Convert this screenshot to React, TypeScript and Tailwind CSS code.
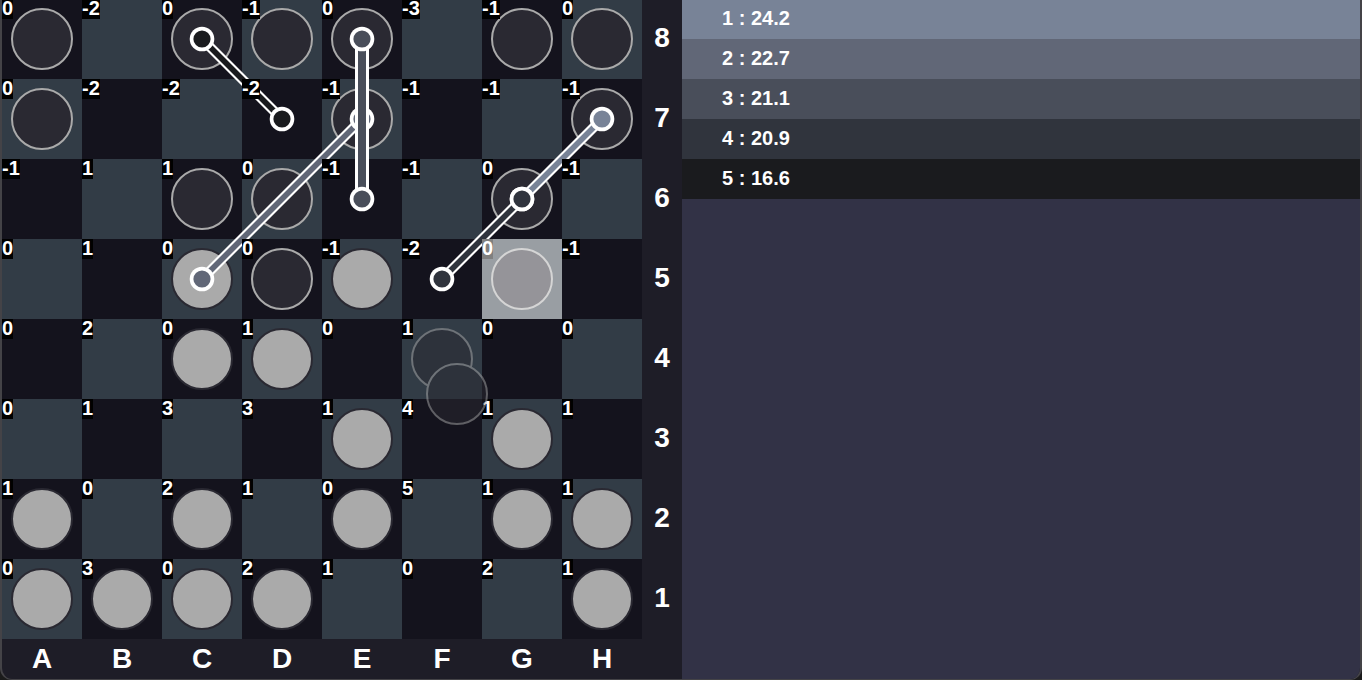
type Side = "b" | "w" | ".";

const FILES = ["A", "B", "C", "D", "E", "F", "G", "H"];

const PIECES = [
  "b.bbb.bb",
  "b...b..b",
  "..bb..b.",
  "..wbw.b.",
  "..ww....",
  "....w.w.",
  "w.w.w.ww",
  "wwww...w",
];

const CONTROL = [
  [0, -2, 0, -1, 0, -3, -1, 0],
  [0, -2, -2, -2, -1, -1, -1, -1],
  [-1, 1, 1, 0, -1, -1, 0, -1],
  [0, 1, 0, 0, -1, -2, 0, -1],
  [0, 2, 0, 1, 0, 1, 0, 0],
  [0, 1, 3, 3, 1, 4, 1, 1],
  [1, 0, 2, 1, 0, 5, 1, 1],
  [0, 3, 0, 2, 1, 0, 2, 1],
];

const MOVES = [
  { from: "H7", to: "G6", score: "24.2", row: "bg-[#788397]", fill: "fill-[#788397]" },
  { from: "E7", to: "C5", score: "22.7", row: "bg-[#616777]", fill: "fill-[#616777]" },
  { from: "E8", to: "E6", score: "21.1", row: "bg-[#494e5a]", fill: "fill-[#494e5a]" },
  { from: "G6", to: "F5", score: "20.9", row: "bg-[#30343d]", fill: "fill-[#30343d]" },
  { from: "C8", to: "D7", score: "16.6", row: "bg-[#1a1b1e]", fill: "fill-[#1a1b1e]" },
];

const SELECTED = "G5";

function center(square: string): [number, number] {
  return [FILES.indexOf(square[0]) * 80 + 40, (8 - Number(square[1])) * 80 + 39];
}

function Piece({ side }: { side: Side }) {
  return (
    <div
      className={
        side === "b"
          ? "size-[62px] rounded-full border-2 border-[#aaaaaa] bg-[#2a2932]"
          : "size-[62px] rounded-full border-2 border-[#2a2932] bg-[#aaaaaa]"
      }
    />
  );
}

/** A bar of constant horizontal width between two points. */
function band(a: [number, number], b: [number, number], half: number) {
  return `${a[0] - half},${a[1]} ${a[0] + half},${a[1]} ${b[0] + half},${b[1]} ${b[0] - half},${b[1]}`;
}

function Arrows() {
  return (
    <svg viewBox="0 0 640 639" className="pointer-events-none absolute inset-0 z-10 size-full" aria-hidden="true">
      {MOVES.map((m) => {
        const a = center(m.from);
        const b = center(m.to);
        return (
          <g key={m.from + m.to}>
            <polygon points={band(a, b, 7)} className="fill-white" />
            <polygon points={band(a, b, 4)} className={m.fill} />
            {[a, b].map(([x, y]) => (
              <g key={`${x}-${y}`}>
                <circle cx={x} cy={y} r="12.3" className="fill-white" />
                <circle cx={x} cy={y} r="8.6" className={m.fill} />
              </g>
            ))}
          </g>
        );
      })}
    </svg>
  );
}

function Board() {
  return (
    <div className="relative grid grid-cols-8 grid-rows-[79px_repeat(7,80px)]">
      {PIECES.map((line, r) =>
        FILES.map((file, c) => {
          const side = line[c] as Side;
          const square = file + (8 - r);
          return (
            <div
              key={square}
              className={`relative flex w-20 items-end justify-center pb-[9px] ${
                (r + c) % 2 === 0 ? "bg-[#14131d]" : "bg-[#323c46]"
              }`}
            >
              {side !== "." && <Piece side={side} />}
              <span
                className={`absolute top-0 left-0 z-20 bg-black text-xl ${
                  r === 0 ? "pb-[3px] leading-4" : "pb-0.5 leading-[18px]"
                }`}
              >
                {CONTROL[r][c]}
              </span>
              {square === SELECTED && <div className="absolute inset-0 z-30 bg-white/50" />}
            </div>
          );
        }),
      )}
      <Arrows />
      <div className="pointer-events-none absolute inset-0 z-40 opacity-50">
        <div className="absolute top-[328px] left-[409px]">
          <Piece side="b" />
        </div>
        <div className="absolute top-[363px] left-[424px]">
          <Piece side="b" />
        </div>
      </div>
    </div>
  );
}

export default function App() {
  return (
    <div className="min-h-screen bg-[#1b1b1b] font-['Liberation_Sans',Arial,sans-serif] font-bold text-white">
      <div className="flex min-h-screen overflow-hidden rounded-b-xl border-x-2 border-b border-[#444347] bg-[#1e1d27]">
        <main className="shrink-0">
          <div className="flex">
            <Board />
            <div className="grid w-10 grid-rows-[79px_repeat(7,80px)]">
              {FILES.map((_, i) => (
                <div key={i} className="flex items-end justify-center pb-[25px] text-[28px] leading-8">
                  {8 - i}
                </div>
              ))}
            </div>
          </div>
          <div className="flex">
            {FILES.map((f) => (
              <div key={f} className="flex h-10 w-20 items-center justify-center text-[28px] leading-8">
                {f}
              </div>
            ))}
          </div>
        </main>
        <aside className="grow bg-[#323246]">
          <ol className="grid grid-rows-[39px_repeat(4,40px)]">
            {MOVES.map((m, i) => (
              <li key={m.score} className={`flex items-end px-10 pb-[11px] text-xl leading-5 ${m.row}`}>
                {`${i + 1} : ${m.score}`}
              </li>
            ))}
          </ol>
        </aside>
      </div>
    </div>
  );
}
